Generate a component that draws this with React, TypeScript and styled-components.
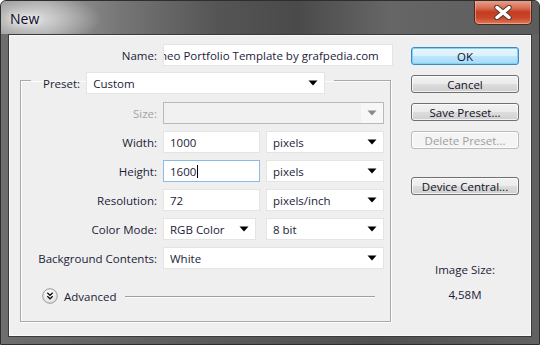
import React, { FC } from 'react'
import styled, { createGlobalStyle } from 'styled-components'

const GlobalStyle = createGlobalStyle`
  html, body {
    margin: 0;
    padding: 0;
    background: #ffffff;
  }
  body {
    font-family: "Open Sans", "Noto Sans", "DejaVu Sans", sans-serif;
  }
`

const Window = styled.div`
  width: 540px;
  height: 345px;
  box-sizing: border-box;
  display: flex;
  flex-direction: column;
  border: 1px solid #2e2e2e;
  border-radius: 6px 6px 0 0;
  background: linear-gradient(to right, #6e6e6e 0%, #5a5a5a 40%, #505050 70%, #626262 100%);
  overflow: hidden;
`

const TitleBar = styled.div`
  height: 33px;
  display: flex;
  align-items: flex-start;
  padding-left: 9px;
  background:
    radial-gradient(ellipse 70px 26px at 30px 18px, rgba(235, 235, 235, 0.85), rgba(200, 200, 200, 0) 100%),
    linear-gradient(to right, #8c8c8c 0%, #9c9c9c 8%, #767676 22%, #555555 40%, #4a4a4a 55%, #666666 72%, #5c5c5c 100%);
`

const Title = styled.span`
  margin-top: 8px;
  font-size: 14px;
  line-height: 20px;
  color: #0c0c28;
  text-shadow: 0 0 6px rgba(255, 255, 255, 0.9), 0 0 10px rgba(255, 255, 255, 0.7);
`

const CloseButton = styled.div`
  margin-left: auto;
  margin-right: 7px;
  margin-top: -1px;
  width: 58px;
  height: 25px;
  box-sizing: border-box;
  border: 1px solid #4a2a22;
  border-top: none;
  border-radius: 0 0 5px 5px;
  background: linear-gradient(to bottom, #e8a793 0%, #d66b52 35%, #c43d1e 50%, #c9472a 75%, #e07b5d 100%);
  box-shadow: inset 0 0 0 1px rgba(255, 200, 180, 0.5);
  display: flex;
  align-items: center;
  justify-content: center;
`

const Body = styled.div`
  flex: 1;
  margin: 0 7px 7px 7px;
  background: #efefef;
  border: 1px solid #3a3a3a;
  box-shadow: inset 0 0 0 1px #fafafa;
  display: flex;
`

const FormColumn = styled.div`
  width: 373px;
  margin-left: 11px;
  padding-top: 9px;
  display: flex;
  flex-direction: column;
`

const Row = styled.div<{ $label: number }>`
  display: grid;
  grid-template-columns: ${(p) => p.$label}px 1fr;
  column-gap: 6px;
  align-items: center;
  height: 22px;
`

const Label = styled.span<{ $disabled?: boolean }>`
  text-align: right;
  font-size: 11.5px;
  color: ${(p) => (p.$disabled ? '#a3a3a3' : '#1c1c38')};
  white-space: nowrap;
`

const Group = styled.fieldset`
  margin: 0;
  width: 371px;
  box-sizing: border-box;
  padding: 8px 6px 17px 0;
  border: 1px solid #a9a9a9;
  box-shadow: inset 1px 1px 0 #fcfcfc, 1px 1px 0 #fcfcfc;
  display: flex;
  flex-direction: column;
  gap: 7px;
`

const Legend = styled.legend`
  margin-left: 10px;
  padding: 6px 9px 0 12px;
  display: flex;
  align-items: center;
  gap: 6px;
`

const Control = styled.div<{ $width?: number; $focused?: boolean; $disabled?: boolean }>`
  width: ${(p) => (p.$width ? `${p.$width}px` : '100%')};
  height: 22px;
  box-sizing: border-box;
  display: flex;
  align-items: center;
  padding-left: 6px;
  background: ${(p) => (p.$disabled ? '#f1f1f1' : '#ffffff')};
  border: 1px solid ${(p) => (p.$focused ? '#8bbbe8' : p.$disabled ? '#b9b9b9' : '#e4e4e4')};
  font-size: 11.5px;
  color: #1c1c38;
  white-space: nowrap;
  overflow: hidden;
`

const ControlText = styled.span`
  flex: 1;
  overflow: hidden;
`

/* name field is scrolled to its end, so the first letter is cut */
const ScrolledText = styled.span`
  margin-left: -10px;
  white-space: nowrap;
`

const ArrowBox = styled.span<{ $disabled?: boolean }>`
  width: 22px;
  align-self: stretch;
  display: flex;
  align-items: center;
  justify-content: center;
  background: ${(p) => (p.$disabled ? '#f7f7f7' : 'transparent')};
`

const Caret = styled.span`
  display: inline-block;
  width: 1px;
  height: 13px;
  background: #000;
  vertical-align: middle;
  margin-left: 1px;
`

const Pair = styled.div<{ $gap: number }>`
  display: flex;
  gap: ${(p) => p.$gap}px;
`

const AdvancedRow = styled.div`
  display: flex;
  align-items: center;
  margin-top: 12px;
  padding-left: 21px;
  padding-right: 9px;
  gap: 6px;
  font-size: 11.5px;
  color: #1c1c38;
`

const Rule = styled.div`
  flex: 1;
  height: 1px;
  margin-left: 2px;
  background: #a0a0a0;
  box-shadow: 0 1px 0 #fdfdfd;
`

const ButtonColumn = styled.div`
  width: 108px;
  margin-left: 18px;
  padding-top: 12px;
  display: flex;
  flex-direction: column;
  align-items: stretch;
`

const Button = styled.div<{ $default?: boolean; $disabled?: boolean; $gap?: number }>`
  height: 18px;
  margin-top: ${(p) => p.$gap ?? 0}px;
  box-sizing: border-box;
  border-radius: 3px;
  border: 1px solid ${(p) => (p.$default ? '#3c8ac4' : p.$disabled ? '#bcbcbc' : '#707070')};
  background: ${(p) =>
    p.$disabled
      ? '#f4f4f4'
      : p.$default
        ? 'linear-gradient(to bottom, #eaf6fd 0%, #d9f0fc 50%, #bee6fd 51%, #a7d9f5 100%)'
        : 'linear-gradient(to bottom, #f2f2f2 0%, #ebebeb 50%, #dddddd 51%, #cfcfcf 100%)'};
  box-shadow: ${(p) => (p.$default ? 'inset 0 0 0 1px #7fd3f8' : 'inset 0 0 0 1px rgba(255,255,255,0.7)')};
  display: flex;
  align-items: center;
  justify-content: center;
  font-size: 11.5px;
  color: ${(p) => (p.$disabled ? '#a0a0a0' : '#111128')};
`

const SizeInfo = styled.div<{ $gap: number }>`
  margin-top: ${(p) => p.$gap}px;
  text-align: center;
  font-size: 11.5px;
  line-height: 16px;
  color: #1c1c38;
`

const DownArrow: FC<{ color?: string }> = ({ color = '#000' }) => (
  <svg width="10" height="6" viewBox="0 0 10 6">
    <path d="M0.5 0.5 H9.5 L5 5.5 Z" fill={color} />
  </svg>
)

type DropdownProps = {
  value?: string
  width?: number
  disabled?: boolean
}

const Dropdown: FC<DropdownProps> = ({ value = '', width, disabled }) => (
  <Control $width={width} $disabled={disabled}>
    <ControlText>{value}</ControlText>
    <ArrowBox $disabled={disabled}>
      <DownArrow color={disabled ? '#8a8a8a' : '#000'} />
    </ArrowBox>
  </Control>
)

const ExpandIcon = () => (
  <svg width="16" height="16" viewBox="0 0 16 16">
    <defs>
      <radialGradient id="exp" cx="0.45" cy="0.35" r="0.7">
        <stop offset="0" stopColor="#ffffff" />
        <stop offset="1" stopColor="#dcdcdc" />
      </radialGradient>
    </defs>
    <circle cx="8" cy="8" r="7.3" fill="url(#exp)" stroke="#9a9a9a" strokeWidth="1" />
    <path d="M5.3 4.8 L8 7.2 L10.7 4.8 M5.3 8.3 L8 10.7 L10.7 8.3" fill="none" stroke="#111" strokeWidth="1.4" />
  </svg>
)

const CloseGlyph = () => (
  <svg width="20" height="15" viewBox="0 0 20 15">
    <path d="M4 2.5 L16 12.5 M16 2.5 L4 12.5" stroke="#5a3a34" strokeWidth="5.5" strokeLinecap="round" />
    <path d="M4 2.5 L16 12.5 M16 2.5 L4 12.5" stroke="#ffffff" strokeWidth="3.4" strokeLinecap="round" />
  </svg>
)

export const App: FC = () => {
  return (
    <>
      <GlobalStyle />
      <Window>
        <TitleBar>
          <Title>New</Title>
          <CloseButton>
            <CloseGlyph />
          </CloseButton>
        </TitleBar>
        <Body>
          <FormColumn>
            <Row $label={137}>
              <Label>Name:</Label>
              <Control>
                <ScrolledText>neo Portfolio Template by grafpedia.com</ScrolledText>
              </Control>
            </Row>
            <Group>
              <Legend>
                <Label>Preset:</Label>
                <Dropdown value="Custom" width={239} />
              </Legend>
              <Row $label={136}>
                <Label $disabled>Size:</Label>
                <Dropdown disabled />
              </Row>
              <Row $label={136}>
                <Label>Width:</Label>
                <Pair $gap={6}>
                  <Control $width={97}>1000</Control>
                  <Dropdown value="pixels" width={118} />
                </Pair>
              </Row>
              <Row $label={136}>
                <Label>Height:</Label>
                <Pair $gap={6}>
                  <Control $width={97} $focused>
                    1600<Caret />
                  </Control>
                  <Dropdown value="pixels" width={118} />
                </Pair>
              </Row>
              <Row $label={136}>
                <Label>Resolution:</Label>
                <Pair $gap={6}>
                  <Control $width={97}>72</Control>
                  <Dropdown value="pixels/inch" width={118} />
                </Pair>
              </Row>
              <Row $label={136}>
                <Label>Color Mode:</Label>
                <Pair $gap={10}>
                  <Dropdown value="RGB Color" width={93} />
                  <Dropdown value="8 bit" width={118} />
                </Pair>
              </Row>
              <Row $label={136}>
                <Label>Background Contents:</Label>
                <Dropdown value="White" />
              </Row>
              <AdvancedRow>
                <ExpandIcon />
                <span>Advanced</span>
                <Rule />
              </AdvancedRow>
            </Group>
          </FormColumn>
          <ButtonColumn>
            <Button $default>OK</Button>
            <Button $gap={10}>Cancel</Button>
            <Button $gap={10}>Save Preset...</Button>
            <Button $gap={10} $disabled>Delete Preset...</Button>
            <Button $gap={28}>Device Central...</Button>
            <SizeInfo $gap={67}>Image Size:</SizeInfo>
            <SizeInfo $gap={9}>4,58M</SizeInfo>
          </ButtonColumn>
        </Body>
      </Window>
    </>
  )
}

export default App
